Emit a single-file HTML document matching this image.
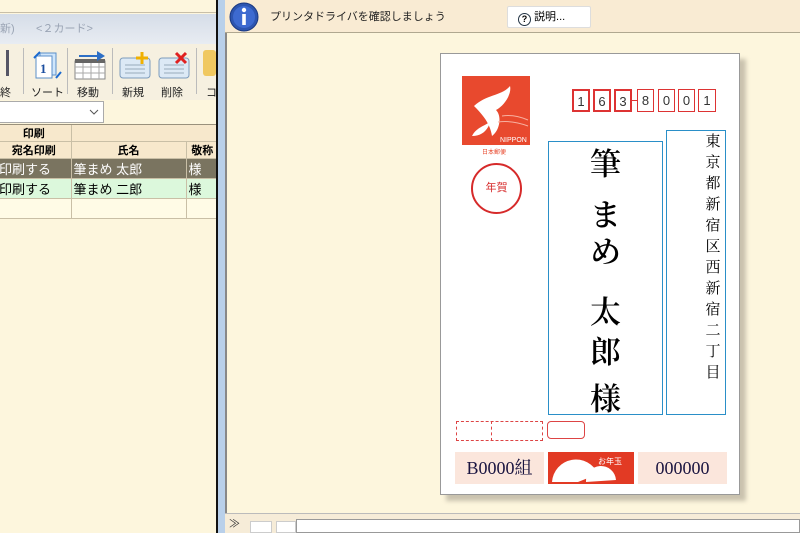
<!DOCTYPE html>
<html><head><meta charset="utf-8"><style>
*{margin:0;padding:0;box-sizing:border-box}
body{width:800px;height:533px;overflow:hidden;position:relative;background:#fdf6dd;font-family:"Liberation Sans","Noto Sans CJK JP",sans-serif;font-size:12px;color:#000}
.abs{position:absolute}
.tb{position:absolute;top:84px;font-size:11px;color:#222}
.sep{position:absolute;top:48px;width:1px;height:46px;background:#bbb}
td{border-right:1px solid #c9bfa6;border-bottom:1px solid #c9bfa6;height:20px;padding:0 2px;white-space:nowrap;overflow:hidden}
.pc{position:absolute;top:89px;height:23px;width:18px;font-size:13px;text-align:center;line-height:22px;color:#333}
.nm{position:absolute;left:548px;width:115px;text-align:center;font-family:"Noto Serif CJK SC",serif;font-size:31px;font-weight:600;line-height:32px}
.ad{position:absolute;left:700px;width:26px;text-align:center;font-family:"Noto Serif CJK SC",serif;font-size:15px;line-height:21px}
</style></head><body>
<div class="abs" style="left:0;top:0;width:216px;height:13px;background:#fdf6dd;border-bottom:1px solid #c8bfa8"></div>
<div class="abs" style="left:0;top:14px;width:216px;height:30px;background:linear-gradient(#d5dde8,#e8ecf2);color:#9aa4b4;font-size:11px;line-height:30px">新)&nbsp;&nbsp;&nbsp;&nbsp;&nbsp;&nbsp;&nbsp;&lt;２カード&gt;</div>
<div class="abs" style="left:0;top:44px;width:216px;height:56px;background:#f6f0e0"></div>
<div class="abs" style="left:0;top:50px;width:9px;height:26px;border-right:3px solid #556;"></div>
<div class="tb" style="left:0">終</div>
<div class="sep" style="left:23px"></div>
<svg class="abs" style="left:32px;top:50px" width="30" height="30"><rect x="8" y="3" width="16" height="22" fill="#cfe6fb" stroke="#5b8fc8"/><rect x="4" y="6" width="16" height="22" fill="#fff" stroke="#5b8fc8"/><text x="8" y="23" font-size="13" font-weight="bold" fill="#1b4ea0" font-family="Liberation Serif">1</text><path d="M2 8 L8 2 M24 28 L29 22" stroke="#1b6ad0" stroke-width="2"/></svg>
<div class="tb" style="left:31px">ソート</div>
<div class="sep" style="left:67px"></div>
<svg class="abs" style="left:73px;top:49px" width="34" height="32"><rect x="2" y="12" width="30" height="18" fill="#fff" stroke="#888"/><path d="M2 18H32M2 24H32M10 12V30M18 12V30M26 12V30" stroke="#aaa"/><rect x="2" y="10" width="30" height="4" fill="#666"/><path d="M6 6H24V2L32 7L24 12V8H6Z" fill="#2d6fc6"/></svg>
<div class="tb" style="left:77px">移動</div>
<div class="sep" style="left:112px"></div>
<svg class="abs" style="left:118px;top:50px" width="34" height="30"><rect x="2" y="8" width="30" height="20" rx="3" fill="#dce9f5" stroke="#7d9cbc"/><path d="M7 15H27M7 19H27M7 23H27" stroke="#9ab"/><path d="M24 2V14M18 8H30" stroke="#f0b000" stroke-width="3"/></svg>
<div class="tb" style="left:122px">新規</div>
<svg class="abs" style="left:157px;top:50px" width="34" height="30"><rect x="2" y="8" width="30" height="20" rx="3" fill="#dce9f5" stroke="#7d9cbc"/><path d="M7 15H27M7 19H27M7 23H27" stroke="#9ab"/><path d="M19 3L29 13M29 3L19 13" stroke="#e02020" stroke-width="3"/></svg>
<div class="tb" style="left:161px">削除</div>
<div class="sep" style="left:196px"></div>
<div class="abs" style="left:203px;top:50px;width:13px;height:26px;background:#f0c860;border-radius:3px"></div>
<div class="tb" style="left:206px">コ</div>
<div class="abs" style="left:0;top:101px;width:104px;height:22px;background:#fff;border:1px solid #aaa;border-left:none"></div>
<svg class="abs" style="left:89px;top:108px" width="10" height="8"><path d="M1 2L5 6L9 2" stroke="#555" fill="none"/></svg>
<div class="abs" style="left:0;top:124px;width:216px;height:1px;background:#9a917c"></div>
<table class="abs" style="left:-3px;top:125px;border-collapse:collapse;font-size:13px;width:222px">
<tr style="background:#f7e8cc;font-weight:bold;font-size:11px"><td style="width:74px;text-align:center;height:16px">印刷</td><td colspan="2" style="height:16px"></td></tr>
<tr style="background:#f7e8cc;font-weight:bold;font-size:11px"><td style="text-align:center;height:16px">宛名印刷</td><td style="width:115px;text-align:center;height:16px">氏名</td><td style="text-align:center;height:16px">敬称</td></tr>
<tr style="background:#7a7460;color:#fff"><td>印刷する</td><td>筆まめ 太郎</td><td>様</td></tr>
<tr style="background:#dcf8dc"><td>印刷する</td><td>筆まめ 二郎</td><td>様</td></tr>
<tr style="background:#fffbe6"><td></td><td></td><td></td></tr>
</table>
<div class="abs" style="left:216px;top:0;width:2px;height:533px;background:#111"></div>
<div class="abs" style="left:218px;top:0;width:7px;height:533px;background:#b9d0ea"></div>
<div class="abs" style="left:225px;top:33px;width:2px;height:480px;background:#888"></div>
<div class="abs" style="left:225px;top:0;width:575px;height:33px;background:#f9ebd3;border-bottom:1px solid #b0a890"></div>
<svg class="abs" style="left:228px;top:1px" width="32" height="32"><circle cx="16" cy="16" r="14" fill="#2d55b0" stroke="#1a3880"/><circle cx="16" cy="16" r="11" fill="#3d6ad0"/><circle cx="16" cy="9" r="2.2" fill="#fff"/><rect x="14.2" y="13" width="3.6" height="11" fill="#fff"/></svg>
<div class="abs" style="left:270px;top:8px;font-size:11px;color:#222">プリンタドライバを確認しましょう</div>
<div class="abs" style="left:507px;top:6px;width:84px;height:22px;background:#fff;border:1px solid #ddd;border-radius:2px;font-size:11px;line-height:20px;padding-left:10px">
<span style="display:inline-block;width:13px;height:13px;border:1.5px solid #234;border-radius:50%;font-size:9px;line-height:10px;text-align:center;font-weight:bold;vertical-align:-2px">?</span>&nbsp;説明...</div>
<div class="abs" style="left:446px;top:59px;width:300px;height:442px;background:#c9c2ae;filter:blur(2px)"></div>
<div class="abs" style="left:440px;top:53px;width:300px;height:442px;background:#fff;border:1px solid #999"></div>
<svg class="abs" style="left:462px;top:76px" width="68" height="80"><rect width="68" height="69" fill="#e8492e"/><path d="M12 30 C25 18 40 20 48 10 C50 18 42 30 34 34 C40 40 38 54 30 60 C28 48 22 40 12 30Z" fill="#fff"/><path d="M10 60 C14 52 22 50 28 46 C26 54 20 60 10 60Z" fill="#fff"/><path d="M40 40 Q52 38 66 44 M36 46 Q50 44 66 50" stroke="#f7b0a0" fill="none"/><text x="38" y="66" font-size="7" fill="#fff" font-family="Liberation Sans">NIPPON</text><text x="20" y="78" font-size="6" fill="#e8492e" font-family="Noto Sans CJK JP">日本郵便</text></svg>
<div class="abs" style="left:471px;top:163px;width:51px;height:51px;border:2px solid #d62a2a;border-radius:50%;color:#d62a2a;font-size:11px;text-align:center;line-height:47px">年賀</div>
<div class="pc" style="left:572px;border:2px solid #d33">1</div>
<div class="pc" style="left:593px;border:2px solid #d33">6</div>
<div class="pc" style="left:614px;border:2px solid #d33">3</div>
<div class="abs" style="left:632px;top:100px;width:6px;height:1px;background:#d33"></div>
<div class="pc" style="left:637px;border:1px solid #d33;width:17px">8</div>
<div class="pc" style="left:658px;border:1px solid #d33;width:17px">0</div>
<div class="pc" style="left:678px;border:1px solid #d33;width:17px">0</div>
<div class="pc" style="left:698px;border:1px solid #d33;width:18px">1</div>
<div class="abs" style="left:548px;top:141px;width:115px;height:274px;border:1px solid #2a8fc8"></div>
<div class="abs" style="left:666px;top:130px;width:60px;height:285px;border:1px solid #2a8fc8"></div>
<div class="nm" style="top:146px">筆</div>
<div class="nm" style="top:197px">ま</div>
<div class="nm" style="top:234px">め</div>
<div class="nm" style="top:294px">太</div>
<div class="nm" style="top:334px">郎</div>
<div class="nm" style="top:381px">様</div>
<div class="ad" style="top:130px">東<br>京<br>都<br>新<br>宿<br>区<br>西<br>新<br>宿<br>二<br>丁<br>目</div>
<div class="abs" style="left:456px;top:421px;width:87px;height:20px;border:1px dashed #d44"></div>
<div class="abs" style="left:491px;top:421px;width:1px;height:20px;border-left:1px dashed #d44"></div>
<div class="abs" style="left:547px;top:421px;width:38px;height:18px;border:1px solid #d44;border-radius:4px"></div>
<div class="abs" style="left:455px;top:452px;width:89px;height:32px;background:#fbe6dc;font-family:'Liberation Serif','Noto Serif CJK SC',serif;font-size:18px;color:#1a1440;line-height:32px;text-align:center">B0000組</div>
<div class="abs" style="left:548px;top:452px;width:86px;height:32px;background:#e23a24"></div>
<svg class="abs" style="left:548px;top:452px" width="86" height="32"><path d="M4 30 A24 24 0 0 1 50 22 L30 30Z" fill="#fff"/><path d="M38 30 A15 15 0 0 1 68 28Z" fill="#fff"/><text x="50" y="12" font-size="8" fill="#fff" font-family="Noto Sans CJK JP">お年玉</text></svg>
<div class="abs" style="left:638px;top:452px;width:89px;height:32px;background:#fbe6dc;font-family:'Liberation Serif',serif;font-size:18px;color:#1a1440;line-height:32px;text-align:center">000000</div>
<div class="abs" style="left:225px;top:513px;width:575px;height:20px;background:#f6ecd8;border-top:1px solid #bbb"></div>
<div class="abs" style="left:229px;top:515px;font-size:11px;color:#333">≫</div>
<div class="abs" style="left:250px;top:521px;width:22px;height:12px;background:#fff;border:1px solid #ccc"></div>
<div class="abs" style="left:276px;top:521px;width:20px;height:12px;background:#fff;border:1px solid #ccc"></div>
<div class="abs" style="left:296px;top:519px;width:504px;height:14px;background:#fff;border:1px solid #999"></div>
</body></html>
